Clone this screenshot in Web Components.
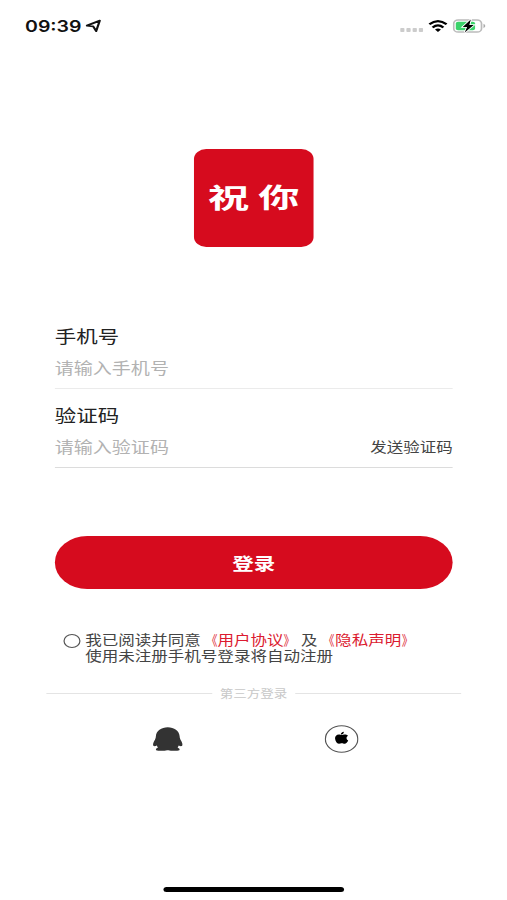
<!DOCTYPE html>
<html lang="zh-CN">
<head>
<meta charset="utf-8">
<title>登录</title>
<style>
html,body{margin:0;width:507px;height:900px;overflow:hidden;background:#fff}
</style>
</head>
<body>
<login-screen></login-screen>
<script>
function define(name, html) {
  customElements.define(name, class extends HTMLElement {
    constructor() {
      super();
      this.attachShadow({mode: 'open'}).innerHTML = html;
    }
  });
}

define('status-bar', `<style>
:host{display:flex;align-items:center;height:52px;padding:0 16.5px 0 20.5px;box-sizing:border-box;color:#111}
b{font:600 16px/20px Inter,"Liberation Sans",sans-serif;width:46px;white-space:nowrap}
svg{display:block;flex:none}
.nav{margin-left:3.5px}
.dots{margin-left:auto}
.wifi{margin-left:4px}
.bat{margin-left:4px}
</style>
<b>09:39</b>
<svg class="nav" width="13" height="14" viewBox="0 0 13 14"><path d="M1.2 6.6 11.8 1.6 8.8 12.2 6.4 7.4Z" fill="none" stroke="#111" stroke-width="1.8" stroke-linejoin="round"/></svg>
<svg class="dots" width="19" height="14" viewBox="0 0 19 14" fill="#ccc"><rect y="9" width="3.5" height="4" rx=".8"/><rect x="5.1" y="9" width="3.5" height="4" rx=".8"/><rect x="10.2" y="9" width="3.5" height="4" rx=".8"/><rect x="15.3" y="9" width="3.5" height="4" rx=".8"/></svg>
<svg class="wifi" width="16" height="14" viewBox="0 0 17 14"><g fill="none" stroke="#000" stroke-width="2.3"><path d="M1 5.2Q8.5-1.8 16 5.2"/><path d="M3.8 8.6Q8.5 4.2 13.2 8.6"/></g><path d="M5.9 10.6Q8.5 8.6 11.1 10.6L8.5 13.4Z"/></svg>
<svg class="bat" width="28" height="16" viewBox="0 0 28 16"><rect x=".9" y="2" width="22.8" height="12" rx="3.6" fill="#fff" stroke="#bbb" stroke-width="1.4"/><path d="M25.3 5.8q3 2.2 0 4.4z" fill="#aaa"/><rect x="2.6" y="3.7" width="15.8" height="8.6" rx="1.8" fill="#3bd36b"/><path d="M14.9 1.6 8.3 8.9H11.9l-2 5.6 7.4-7.4h-3.6z" fill="#000" stroke="#fff" stroke-width="1.6" paint-order="stroke"/></svg>`);

define('app-logo', `<style>
:host{display:flex;width:98.4px;height:98px;margin:97px auto 0;background:#d60b1e;border-radius:10px;align-items:center;justify-content:center;color:#fff}
span{display:flex;gap:6px;font:700 27px/40px "Noto Sans CJK SC",sans-serif;margin-bottom:3px;transform:scaleX(1.25)}
</style><span><slot></slot></span>`);

define('form-field', `<style>
:host{display:block;height:79.5px;box-sizing:border-box;border-bottom:1px solid #ebebeb;padding-top:13px}
:host([strong]){height:79px;border-bottom:1.5px solid #dcdcdc}
.label{font-size:17.6px;line-height:26px;color:#222;font-weight:400}
.row{display:flex;justify-content:space-between;align-items:center;height:24px;margin-top:6px}
.hint{font-size:15.6px;line-height:24px;color:#b2b2b2}
.act{font-size:13.5px;line-height:24px;color:#444}
</style><div class="label"><slot name="label"></slot></div><div class="row"><span class="hint"><slot></slot></span><span class="act"><slot name="action"></slot></span></div>`);

define('primary-button', `<style>
:host{display:flex;height:53px;border-radius:27px;background:#d60b1e;align-items:center;justify-content:center;color:#fff;font-size:17.6px;line-height:26px;font-weight:700}
</style><slot></slot>`);

define('user-agreement', `<style>
:host{display:flex;font:13.55px/16px "Liberation Sans","Noto Sans CJK SC",sans-serif;color:#444;white-space:nowrap}
i{box-sizing:border-box;width:14.2px;height:14.2px;border:1px solid #555;border-radius:50%;margin:1px 3.6px 0 0;flex:none}
em{font-style:normal;color:#dc1b30}
u{display:inline-block;text-decoration:none;transform:scaleX(.68);transform-origin:92% 50%}
u.end{transform-origin:8% 50%}
.mid{margin:0 .8px}
.line{height:16px}
</style><i></i><div class="text"><div class="line">我已阅读并同意<em><u>《</u>用户协议<u class="end">》</u></em><span class="mid">及</span><em><u>《</u>隐私声明<u class="end">》</u></em></div><div class="line">使用未注册手机号登录将自动注册</div></div>`);

define('line-divider', `<style>
:host{display:flex;align-items:center;gap:6.5px;font-size:11.1px;line-height:16px;color:#c8c8c8}
:host::before,:host::after{content:"";flex:1;height:1px;background:#e4e4e4}
</style><slot></slot>`);

define('social-logins', `<style>
:host{display:flex;justify-content:space-between;align-items:center;height:30px;padding:0 121.3px 0 125px}
svg{display:block}
</style>
<svg width="25" height="27" viewBox="0 0 25 27"><path fill="#333" d="M12.5 2.2C7.3 2.2 3 6 2.8 11 2.6 13.6 2.2 14.4 1.4 16 .5 18.2.2 19.8.7 20.8c.8.7 1.8.3 2.8-.3l.9 2.2c-1.4.4-2 1.6-1.4 2.5 1.6.8 7 .7 8.9 0h1.2c1.9.7 7.3.8 8.9 0 .6-.9 0-2.1-1.4-2.5l.9-2.2c1 .6 2 1 2.8.3.5-1 .2-2.6-.7-4.8-.8-1.6-1.2-2.4-1.4-5C22 6 17.7 2.2 12.5 2.2Z"/></svg>
<svg width="28" height="28" viewBox="0 0 28 28"><circle cx="14" cy="14" r="13.3" fill="#fff" stroke="#555" stroke-width="1"/><path transform="translate(.1 .6) scale(.96)" d="M16.4 6.3c.1 1.8-1.1 3-2.6 3-.1-1.6 1.1-2.8 2.6-3ZM18.7 13c0-1.1.5-1.9 1.3-2.4-1.1-1.5-3.2-1.5-4.2-1-.9.4-1.4.4-2.4 0-2.4-.9-4.8.9-4.5 4.1.3 3.3 2.2 5.4 3.6 5.2.9-.1 1.2-.5 2.2-.5 1.1 0 1.4.6 2.4.5 1.2 0 2.4-1.7 3-3.3-.9-.5-1.4-1.4-1.4-2.6Z"/></svg>`);

define('login-screen', `<style>
:host{display:flex;flex-direction:column;width:415.57px;height:900px;background:#fff;transform:scaleX(1.22);transform-origin:0 0;font-family:"Noto Sans CJK SC",sans-serif}
form,primary-button{margin:0 44.5px 0 44.9px}
form{margin-top:62.5px;margin-bottom:68px}
user-agreement{margin:44px 0 0 52px}
line-divider{margin:20px 37.5px 0}
social-logins{margin-top:22.5px}
.home{width:148px;height:5px;border-radius:3px;background:#000;margin:auto auto 8px}
</style>
<status-bar></status-bar>
<app-logo><span>祝</span><span>你</span></app-logo>
<form>
<form-field><span slot="label">手机号</span>请输入手机号</form-field>
<form-field strong><span slot="label">验证码</span>请输入验证码<span slot="action">发送验证码</span></form-field>
</form>
<primary-button>登录</primary-button>
<user-agreement></user-agreement>
<line-divider>第三方登录</line-divider>
<social-logins></social-logins>
<div class="home"></div>`);
</script>
</body>
</html>
